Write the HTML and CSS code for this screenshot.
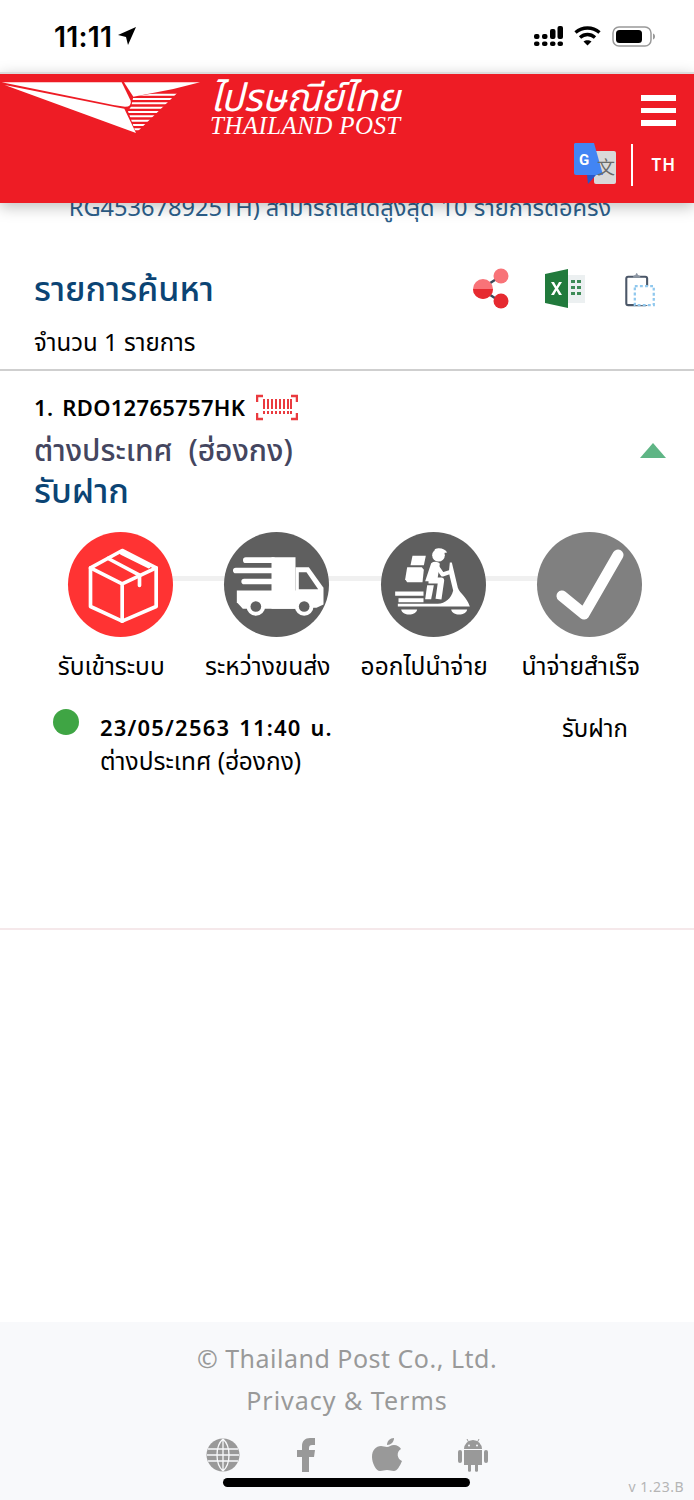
FILE: index.html
```html
<!DOCTYPE html>
<html>
<head lang="th">
    <meta charset="UTF-8">
    <title>Thailand Post Track</title>
    <link rel="stylesheet" href="styles.css">
</head>
<body>
<div id="page">
    <div class="status">
        <div class="status-time">11:11
            <svg width="20" height="20" viewBox="0 0 20 20"><path d="M19 1 1 9l8 2 2 8z" fill="#000"/></svg>
        </div>
        <div class="status-icons">
            <svg width="29" height="20" viewBox="0 0 29 20" fill="#000">
                <rect x="0" y="8" width="5.500" height="5" rx="2"/><rect x="0" y="15.500" width="5.500" height="4.500" rx="2"/>
                <rect x="8" y="8" width="5.500" height="5" rx="2"/><rect x="8" y="15.500" width="5.500" height="4.500" rx="2"/>
                <rect x="16" y="3" width="5.500" height="10" rx="2"/><rect x="16" y="15.500" width="5.500" height="4.500" rx="2"/>
                <rect x="23.500" y="0" width="5.500" height="13" rx="2"/><rect x="23.500" y="15.500" width="5.500" height="4.500" rx="2"/>
            </svg>
            <svg width="27" height="20" viewBox="0 0 27 20" fill="none" stroke="#000" stroke-width="3.400">
                <path d="M1.500 6.500c7-6 17-6 24 0"/><path d="M6 11.500c4.500-4 10.500-4 15 0"/>
                <path d="M13.500 19.500 9.500 15.500c2.200-1.800 5.800-1.800 8 0z" fill="#000" stroke="none"/>
            </svg>
            <svg class="batt" width="44" height="21" viewBox="0 0 44 21">
                <rect x="1" y="1" width="38" height="19" rx="6" fill="none" stroke="#999" stroke-width="1.500"/>
                <rect x="4" y="4" width="26" height="13" rx="3.500" fill="#000"/>
                <path d="M41 7.500c1.500.5 2 1.800 2 3s-.5 2.500-2 3z" fill="#999"/>
            </svg>
        </div>
    </div>

    <div class="header">
        <div class="logo">
            <svg class="plane" width="210" height="70" viewBox="0 0 630 210">
                <defs>
                    <clipPath id="wing"><path d="M400 68 545 44 408 177 384 112 394 96z"/></clipPath>
                </defs>
                <path d="M5 25H365L392 80Q396 98 375 98L340 93z" fill="#fff"/>
                <path d="M14 33 345 99 373 104 408 177z" fill="#fff"/>
                <path d="M372 25H600L520 45 400 68z" fill="#fff"/>
                <g clip-path="url(#wing)" stroke="#fff" stroke-width="6">
                    <path d="M370 62H560M370 75H560M370 88H560M370 101H560M370 114H560M370 127H560M370 140H560M370 153H560M370 166H560"/>
                </g>
            </svg>
            <div class="logo-text">
                <div class="logo-th">ไปรษณีย์ไทย</div>
                <div class="logo-en">THAILAND POST</div>
            </div>
        </div>
        <div class="header-right">
            <div class="burger"><span></span><span></span><span></span></div>
            <div class="lang">
                <svg width="43" height="43" viewBox="0 0 43 43">
                    <rect x="20" y="8" width="22" height="33" rx="2" fill="#d9d9d9"/>
                    <path d="M1 0H20L29 32H2a2 2 0 0 1-2-2V1z" fill="#4285f4"/>
                    <path d="M13 32H22L14 41z" fill="#2a56c6"/>
                    <text x="5" y="22" class="g-letter">G</text>
                    <text x="23" y="31" class="zh-letter">文</text>
                </svg>
                <div class="lang-sep"></div>
                <div class="lang-name">TH</div>
            </div>
        </div>
    </div>

    <div class="intro">RG453678925TH) สามารถใส่ได้สูงสุด 10 รายการต่อครั้ง</div>

    <div class="title-row">
        <h1 class="title">รายการค้นหา</h1>
        <div class="title-icons">
            <svg width="40" height="42" viewBox="0 0 40 42">
                <path d="M9 21 29 8M9 21 29 34" stroke="#3c4a5a" stroke-width="2.500"/>
                <circle cx="29" cy="8" r="7.500" fill="#f87378"/>
                <circle cx="29" cy="33" r="7.500" fill="#e62a30"/>
                <circle cx="11" cy="21" r="10" fill="#f87378"/>
                <path d="M1 21a10 10 0 0 0 20 0z" fill="#e62a30"/>
            </svg>
            <svg width="42" height="40" viewBox="0 0 42 40">
                <rect x="22" y="6" width="19" height="28" fill="#ecf0f1"/>
                <path d="M1 5 24 0V39L1 34z" fill="#217a3c"/>
                <path d="M7 13 10 13 12.500 17.500 15 13 18 13 14 19.500 18 26 15 26 12.500 21.500 10 26 7 26 11 19.500z" fill="#fff"/>
                <path d="M27 11h4v3h-4zM33 11h4v3h-4zM27 17h4v3h-4zM33 17h4v3h-4zM27 23h4v3h-4zM33 23h4v3h-4z" fill="#3e8b57"/>
            </svg>
            <svg class="clip" width="31" height="36" viewBox="0 0 32 38">
                <path d="M3 36a2 2 0 0 1-2-2V8a2 2 0 0 1 2-2h18a2 2 0 0 1 2 2v26a2 2 0 0 1-2 2z" fill="none" stroke="#4b5768" stroke-width="2.200"/>
                <path d="M8 7c0-2 1.500-2.500 2.500-2.500C11 3 11.500 2 12 2s1 1 1.500 2.500c1 0 2.500.5 2.500 2.500z" fill="#8c96a3"/>
                <rect x="10" y="16" width="20" height="20" fill="#fff" stroke="#90c8ee" stroke-width="2.400" stroke-dasharray="3 2.400"/>
            </svg>
        </div>
    </div>
    <div class="count">จำนวน 1 รายการ</div>

    <div class="item">
        <div class="item-no">1. RDO12765757HK
            <svg width="42" height="27" viewBox="0 0 42 27" fill="none" stroke="#ea3a3f">
                <path d="M1 8V2H7M35 2H41V8M1 19V25H7M35 25H41V19" stroke-width="2.500"/>
                <path d="M8 5V15M12 5V15M16 5V15M20 5V15M24 5V15M28 5V15M32 5V15M35 5V15M8 17V20M12 17V20M16 17V20M20 17V20M24 17V20M28 17V20M32 17V20M35 17V20" stroke-width="2"/>
            </svg>
        </div>
        <div class="item-place">
            <span>ต่างประเทศ (ฮ่องกง)</span>
            <i class="up"></i>
        </div>
        <div class="item-state">รับฝาก</div>

        <div class="steps">
            <div class="step">
                <div class="circle red">
                    <svg width="105" height="105" viewBox="7.500 4.500 315 315" fill="none" stroke="#fff" stroke-width="11" stroke-linejoin="round" stroke-linecap="round">
                        <path d="M170 60 272 112V228L170 272 75 228V112z"/>
                        <path d="M75 112 170 160 272 112M170 160V272"/>
                        <path d="M128 84 222 134V165M168 68 250 108"/>
                    </svg>
                </div>
                <div class="step-name">รับเข้าระบบ</div>
            </div>
            <div class="step">
                <div class="circle dark">
                    <svg width="105" height="105" viewBox="7.500 4.500 315 315" fill="#fff">
                        <path d="M150 80H222V235H150z"/>
                        <path d="M73 89H155M43 120H155M68 153H155" fill="none" stroke="#fff" stroke-width="17" stroke-linecap="round"/>
                        <path d="M46 180H224V235H64L46 215z"/>
                        <path d="M222 110H262L306 172V222L285 232H222z"/>
                        <path d="M232 125H255L290 176H232z" fill="#5f5f5f"/>
                        <circle cx="103" cy="228" r="28"/>
                        <circle cx="103" cy="228" r="16" fill="#5f5f5f"/>
                        <circle cx="248" cy="228" r="28"/>
                        <circle cx="248" cy="228" r="16" fill="#5f5f5f"/>
                    </svg>
                </div>
                <div class="step-name">ระหว่างขนส่ง</div>
            </div>
            <div class="step">
                <div class="circle dark">
                    <svg width="105" height="105" viewBox="7.500 4.500 315 315" fill="#fff">
                        <path d="M102 76H142L136 104H96z"/>
                        <path d="M86 110H130L136 118 132 155H86L80 146z"/>
                        <circle cx="180" cy="74" r="19"/>
                        <path d="M168 56C185 50 200 56 206 66L180 70z"/>
                        <path d="M158 98C166 92 178 93 184 100L176 152H140z"/>
                        <path d="M174 106 192 132 216 124" fill="none" stroke="#fff" stroke-width="12" stroke-linejoin="round"/>
                        <path d="M150 150H188L180 206" fill="none" stroke="#fff" stroke-width="18" stroke-linejoin="round"/>
                        <path d="M214 96H220L238 172C245 190 265 200 274 228H58V220H178C200 218 218 205 224 180L211 126z"/>
                        <path d="M146 164H166L158 206H140z"/>
                        <path d="M50 183H135V196H50zM60 203H135V215H60z"/>
                        <path d="M68 237H116C114 247 104 252 92 252S70 247 68 237zM218 237H266C264 247 254 252 242 252S220 247 218 237z"/>
                    </svg>
                </div>
                <div class="step-name">ออกไปนำจ่าย</div>
            </div>
            <div class="step">
                <div class="circle grey">
                    <svg width="68" height="72" viewBox="0 0 68 72" fill="none" stroke="#fff" stroke-width="11" stroke-linecap="round" stroke-linejoin="round">
                        <path d="M6 47 28 65 62 6"/>
                    </svg>
                </div>
                <div class="step-name">นำจ่ายสำเร็จ</div>
            </div>
        </div>

        <div class="log">
            <i class="dot"></i>
            <div class="log-body">
                <div class="log-top">
                    <div class="log-date">23/05/2563 11:40 น.</div>
                    <div class="log-state">รับฝาก</div>
                </div>
                <div class="log-place">ต่างประเทศ (ฮ่องกง)</div>
            </div>
        </div>
    </div>

    <div class="spacer"></div>

    <div class="footer">
        <div class="footer-line copy">© Thailand Post Co., Ltd.</div>
        <div class="footer-line">Privacy &amp; Terms</div>
        <div class="footer-icons">
            <svg width="34" height="34" viewBox="0 0 34 34" fill="none" stroke="#999">
                <circle cx="17" cy="17" r="16.500" fill="#999" stroke="none"/>
                <path d="M2 11H32M1 17H33M2 23H32M17 1V33M17 1C9 8 9 26 17 33M17 1C25 8 25 26 17 33" stroke="#f8f9fb" stroke-width="1.300"/>
            </svg>
            <svg width="20" height="34" viewBox="0 0 20 34" fill="#999">
                <path d="M6 34V19H1V12H6V8C6 3 9 0 14 0H19V7H16C14 7 13 8 13 10V12H19L18 19H13V34z"/>
            </svg>
            <svg width="30" height="34" viewBox="0 0 30 34" fill="#999">
                <path d="M15 9C17 9 19 7 22 7 25 7 28 9 29 11 24 14 25 21 30 23 28 28 25 33 22 33 19 33 18 32 15 32S11 33 8 33C4 33 0 25 0 19 0 12 4 8 9 8 11 8 13 9 15 9z"/>
                <path d="M15 7C15 3 18 0 22 0 22 4 19 7 15 7z"/>
            </svg>
            <svg width="30" height="34" viewBox="0 0 30 34" fill="#999">
                <path d="M6 11A9 9 0 0 1 24 11z"/>
                <path d="M6 12H24V27H20V33A2 2 0 0 1 17 33V27H13V33A2 2 0 0 1 10 33V27H6z"/>
                <rect x="0" y="12" width="4" height="13" rx="2"/><rect x="26" y="12" width="4" height="13" rx="2"/>
                <path d="M9 1 11 5M21 1 19 5" stroke="#999"/>
                <circle cx="11" cy="7.500" r="1" fill="#f8f9fb"/><circle cx="19" cy="7.500" r="1" fill="#f8f9fb"/>
            </svg>
        </div>
        <div class="version">v 1.23.B</div>
        <div class="home-bar"></div>
    </div>
</div>
</body>
</html>
```

FILE: styles.css
```css
*{
    margin:0;
    padding:0;
    box-sizing:border-box;
}
body{
    background:#fff;
    font-family:"Noto Sans","Noto Sans Thai","DejaVu Sans",sans-serif;
    color:#000;
}
#page{
    width:694px;
    height:1500px;
    display:flex;
    flex-direction:column;
    overflow:hidden;
}
.status{
    height:72px;
    flex:none;
    padding:0 38px 0 54px;
    display:flex;
    justify-content:space-between;
    align-items:center;
}
.status-time{
    font-family:Inter,sans-serif;
    font-size:28.500px;
    font-weight:600;
    letter-spacing:.2px;
    display:flex;
    align-items:center;
    gap:5px;
}
.status-icons{
    display:flex;
    align-items:center;
    gap:11px;
}
.header{
    height:131px;
    flex:none;
    background:#ee1c25;
    border-top:2px solid #dcdcdc;
    box-shadow:0 4px 14px rgba(0,0,0,.25);
    position:relative;
    z-index:2;
    display:flex;
    justify-content:space-between;
    padding:0 18px 0 0;
}
.logo{
    display:flex;
    align-items:flex-start;
}
.plane{
    flex:none;
}
.logo-text{
    color:#fff;
    font-style:italic;
    margin-top:4px;
}
.logo-th{
    font-size:38.500px;
    line-height:36px;
    letter-spacing:-.5px;
}
.logo-en{
    font-family:"Liberation Serif",serif;
    font-size:25px;
    line-height:18px;
    margin-top:3px;
    letter-spacing:.4px;
}
.header-right{
    display:flex;
    flex-direction:column;
    align-items:flex-end;
    justify-content:space-between;
    padding:21px 0 17px;
}
.burger{
    width:35px;
    display:flex;
    flex-direction:column;
    gap:7px;
}
.burger span{
    height:5.500px;
    background:#fff;
}
.lang{
    display:flex;
    align-items:center;
}
.lang-sep{
    width:2px;
    height:42px;
    background:#fff;
    margin:0 18px 0 14px;
}
.lang-name{
    color:#fff;
    font-size:17px;
    font-weight:600;
    letter-spacing:1px;
}
.g-letter{
    fill:#fff;
    font:700 15px "Roboto",sans-serif;
}
.zh-letter{
    fill:#6b6b6b;
    font:400 18px "Noto Sans CJK SC",sans-serif;
}
.intro{
    height:30px;
    margin-top:-11px;
    padding-right:14px;
    text-align:center;
    font-size:23.600px;
    line-height:30px;
    color:#2d5f8b;
    flex:none;
}
.title-row{
    margin-top:44px;
    padding:0 38px 0 34px;
    display:flex;
    justify-content:space-between;
    align-items:center;
    height:48px;
    flex:none;
}
.title{
    font-size:34px;
    font-weight:500;
    color:#0b4474;
}
.title-icons{
    display:flex;
    align-items:center;
    gap:32px;
    margin-bottom:3px;
}
.clip{
    margin-left:7px;
}
.count{
    margin-top:13px;
    padding:0 34px;
    font-size:24px;
    line-height:30px;
    height:44px;
    border-bottom:2px solid #cfcfcf;
    flex:none;
}
.item{
    padding:21px 0 0;
    height:559px;
    border-bottom:2px solid #f5e8ea;
    flex:none;
}
.item-no{
    padding:0 34px;
    font-size:22px;
    font-weight:600;
    line-height:30px;
    letter-spacing:.3px;
    word-spacing:3px;
    display:flex;
    align-items:center;
    gap:11px;
}
.item-place{
    margin-top:13px;
    padding:0 28px 0 34px;
    font-size:30px;
    font-weight:500;
    word-spacing:8px;
    line-height:30px;
    color:#44465f;
    display:flex;
    justify-content:space-between;
    align-items:center;
}
.up{
    width:0;
    height:0;
    border:13px solid transparent;
    border-top:0;
    border-bottom:15px solid #5fb585;
}
.item-state{
    margin-top:6px;
    padding:0 34px;
    font-size:34px;
    font-weight:500;
    line-height:38px;
    color:#0b4474;
}
.steps{
    margin:23px 0 0 33px;
    display:grid;
    grid-template-columns:repeat(4,156.500px);
    position:relative;
}
.steps::before{
    content:"";
    position:absolute;
    left:100px;
    right:100px;
    top:44px;
    height:5px;
    background:#f0f0f0;
}
.step{
    display:flex;
    flex-direction:column;
    align-items:center;
    position:relative;
}
.circle{
    width:105px;
    height:105px;
    border-radius:50%;
    margin-left:18px;
    display:flex;
    align-items:center;
    justify-content:center;
}
.red{
    background:#ff3333;
}
.dark{
    background:#5f5f5f;
}
.grey{
    background:#808080;
}
.step-name{
    margin-top:14px;
    font-size:24.500px;
    line-height:30px;
    white-space:nowrap;
}
.log{
    margin-top:28px;
    padding:0 66px 0 53px;
    display:flex;
    gap:21px;
}
.dot{
    width:26px;
    height:26px;
    border-radius:50%;
    background:#3fa544;
    flex:none;
}
.log-body{
    flex:1;
    margin-top:2px;
    font-size:24.500px;
    line-height:33px;
}
.log-top{
    display:flex;
    justify-content:space-between;
}
.log-date{
    font-size:22px;
    font-weight:600;
    letter-spacing:1.200px;
    word-spacing:2px;
}
.log-state{
    font-size:24px;
}
.spacer{
    flex:1;
}
.footer{
    height:178px;
    flex:none;
    background:#f8f9fb;
    position:relative;
    color:#999;
    font-size:25px;
    letter-spacing:1px;
    text-align:center;
    padding-top:15px;
}
.footer-line{
    line-height:42px;
}
.copy{
    letter-spacing:.5px;
}
.footer-icons{
    margin-top:17px;
    display:flex;
    justify-content:center;
    gap:56px;
}
.version{
    position:absolute;
    right:10px;
    bottom:4px;
    font-size:14px;
    color:#b5b5b5;
    letter-spacing:.5px;
}
.home-bar{
    position:absolute;
    left:223px;
    top:156px;
    width:247px;
    height:9px;
    border-radius:5px;
    background:#000;
}
```
